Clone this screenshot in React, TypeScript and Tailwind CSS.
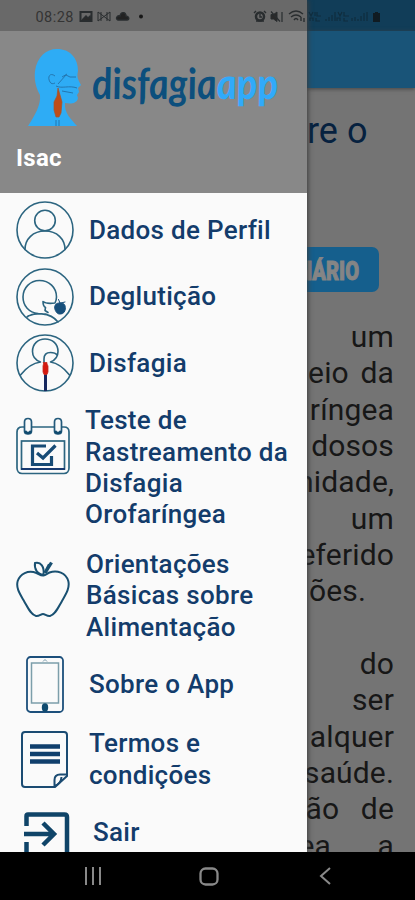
import type { ReactNode } from "react";

const INK = "#0f4a6e";

const circleProps = {
  width: 58,
  height: 58,
  viewBox: "0 0 58 58",
  fill: "none",
  stroke: "#2c6580",
  strokeWidth: 1.6,
  strokeLinecap: "round" as const,
  strokeLinejoin: "round" as const,
};

function ProfileIcon() {
  return (
    <svg {...circleProps}>
      <circle cx="29" cy="29" r="28" />
      <circle cx="29" cy="19.500" r="10.300" />
      <path d="M9 48.500C9 38 17 30 29 30S49 38 49 48.500" />
    </svg>
  );
}

function SwallowIcon() {
  return (
    <svg {...circleProps}>
      <circle cx="29" cy="29" r="28" />
      <path d="M22 45.500C13 44.500 7 38 7 29C7 20 14 12.500 23.500 12.500C33 12.500 40.500 19.500 40.500 29C40.500 31.500 40 33 39 35C35 35.500 30 36 27 33.500C27 36.500 27.500 38.500 29.500 39.500L29 42.500L32 44.500M11 49C17 44.500 34 43.500 42 54M12 48C18 45.500 25 45.500 30 46" />
      <g fill="#174f7b" stroke="#174f7b" strokeWidth="1">
        <path d="M44 35C39.500 34.500 38 38 39 41.500C40 44.500 42 46.500 44.500 46C47.500 46 49 43.500 49.300 41C49.700 37 48 34.500 44 35Z" />
        <path d="M44 35L42.500 31.500M45 35L49 34" />
      </g>
    </svg>
  );
}

function DysphagiaIcon() {
  return (
    <svg {...circleProps}>
      <circle cx="29" cy="29" r="28" />
      <path d="M24.500 28C19 26 16.500 22 16.500 17.500C16.500 10 22 5 29 5C36.500 5 42 10 42 17.500C42 22 39.500 26 34.500 28C41 29 48 34 53.500 41M24.500 28C17 29 10 34 4.500 41" />
      <path d="M28 29V25C28 20.500 31 18.500 34.500 18.500C38 18.500 40 19.500 41 21" />
      <path d="M29.500 38V57" stroke="#17285f" strokeWidth="3" strokeLinecap="butt" />
      <path d="M27.500 28.500H31V30L32 32V38L31 40.500H28L27 38V32L27.500 30Z" fill="#d6190f" stroke="#c5281c" strokeWidth=".8" />
    </svg>
  );
}

function CalendarIcon() {
  return (
    <svg width="54" height="58" viewBox="0 0 54 58" fill="none" stroke="#2c6580" strokeWidth="1.700">
      <path d="M8 10H6C3 10 1 12 1 15V51C1 54 3 56.500 6 56.500H48C51 56.500 53 54 53 51V15C53 12 51 10 48 10H46M16 10H38" />
      <rect x="5.500" y="24" width="43" height="28" />
      <path d="M5 52H49" stroke="#17396f" strokeWidth="2" />
      <g fill="#fafafa" stroke="#235a7b">
        <path d="M8.500 5Q8.500 1.500 12 1.500T15.500 5V14Q15.500 17 12 17T8.500 14Z" />
        <path d="M38.500 5Q38.500 1.500 42 1.500T45.500 5V14Q45.500 17 42 17T38.500 14Z" />
      </g>
      <path d="M9 14Q12 18 15 14M39 14Q42 18 45 14" stroke={INK} strokeWidth="2.500" />
      <path d="M30 29H16.500V47.500H35.500V39M21 36L27 41L39.500 28.500" stroke="#174b75" strokeWidth="3.200" />
    </svg>
  );
}

function AppleIcon() {
  return (
    <svg width="54" height="58" viewBox="0 0 54 58" fill="none" stroke="#195071" strokeWidth="2">
      <path d="M20.500 13C12 9.500 4 14 1.700 21C-.3 28 4 34 8 41C12 48 15 55 20 56C23 56.500 25 54 27 54C29 54 31 56.500 34 56C39 55 42 48 46 41C50 34 54 28 52.300 21C50 13 41 9.500 33.500 12.500C31 13.700 29.500 15.300 27.500 15.500C24.500 15.800 23 14 20.500 13Z" />
      <path d="M27.500 14.500C21.500 14.500 18 9 19 3C25 1.500 28.500 7 27.500 14.500Z" fill="#fafafa" />
      <path d="M29 13L33.500 4.500M29 13L35.500 2.500" strokeWidth="3.300" />
    </svg>
  );
}

function TabletIcon() {
  return (
    <svg width="38" height="57" viewBox="0 0 38 57" fill="none" stroke="#1c4f7b" strokeWidth="1.800">
      <rect x="1" y="1" width="36" height="55" rx="3.500" />
      <rect x="5.500" y="7" width="27" height="40" stroke="#7c9eaa" strokeWidth="1.500" />
      <path d="M17 5.500L19 3.500L21 5.500" stroke="#789bab" strokeWidth="1" />
      <ellipse cx="19" cy="51.500" rx="2.300" ry="3.300" fill={INK} stroke={INK} />
    </svg>
  );
}

function DocumentIcon() {
  return (
    <svg width="47" height="57" viewBox="0 0 47 57" fill="none" stroke="#1b4b72" strokeWidth="2">
      <path d="M4 1H43Q46 1 46 4V45L34 56H4Q1 56 1 53V4Q1 1 4 1Z" />
      <path d="M33.500 56V49Q33.500 43.500 39 43.500H46M34 55Q40 52.500 40.500 46" />
      <path d="M9 15.500H39M9 23H39M9 30.500H39" stroke="#103f6c" strokeWidth="4.500" />
    </svg>
  );
}

function ExitIcon() {
  return (
    <svg width="46" height="54" viewBox="0 0 46 54" fill="none" stroke="#0f4468" strokeWidth="4.500">
      <path d="M2.500 14V4Q2.500 2.500 4 2.500H40.500Q43 2.500 43 5V53M2.500 53V30M0 22H31M19 11L30 22L19 33" />
    </svg>
  );
}

type ItemProps = {
  icon: ReactNode;
  lines: string[];
  row: string;
  label: string;
};

function MenuItem({ icon, lines, row, label }: ItemProps) {
  return (
    <li className={`flex shrink-0 items-center ${row}`}>
      {icon}
      <span className={`shrink-0 whitespace-nowrap ${label}`}>
        {lines.map((line) => (
          <span key={line} className="block">{line}</span>
        ))}
      </span>
    </li>
  );
}

function HeadLogo() {
  return (
    <svg width="54" height="80" viewBox="0 0 54 80" fill="none">
      <path d="M0 77C7 66 13 56 12 46C8 39 6 31 7 22C9 8 18 0 29 0C42 0 50 9 50 22C49 27 49 29 53 36L50 39L51 43L49 46L50 49C49 55 42 55 37 54C36 64 43 70 49 77Z" fill="#2eacf5" />
      <path d="M27 27C22 23 19 28 22 33C23 35 25 35 27 34M30 35L38 26L42 28H48M28 37C34 40 41 36 49 39M34 42L45 44M34 28L39 25M28 71V77M31 71V77" stroke="#2370a8" strokeWidth=".9" />
      <path d="M30 39L32 46L34 53L33 64L31 68H28L26 61V53L29 47Z" fill="#be4d19" stroke="#a4552e" strokeWidth=".7" />
    </svg>
  );
}

function Header() {
  return (
    <header className="h-[193px] shrink-0 bg-[#888888]">
      <div className="h-[31px] bg-[#696969]" />
      <div className="flex h-[96px] pt-[18px] pl-[28px]">
        <HeadLogo />
        <svg className="ml-[11px]" width="192" height="66" viewBox="0 0 192 66">
          <text
            transform="translate(0 50) skewX(5)"
            textLength="186"
            lengthAdjust="spacingAndGlyphs"
            fontFamily="Lato, sans-serif"
            fontStyle="italic"
            fontWeight="700"
            fontSize="43"
            fill="#0c4f7d"
          >
            disfagia<tspan fill="#31aafa" fontWeight="900">app</tspan>
          </text>
        </svg>
      </div>
      <p className="pt-[16px] pl-[16px] text-[24px] leading-[30px] font-bold tracking-[0.3px] text-white">Isac</p>
    </header>
  );
}

function StatusIcons() {
  return (
    <svg className="absolute top-0 left-0" width="415" height="31" viewBox="0 0 415 31" fill="none" stroke="#292d2f" strokeWidth="1.400">
      <text x="35.500" y="21.500" fontFamily="Roboto, sans-serif" fontSize="14.500" textLength="38" fill="#343434" stroke="none">08:28</text>
      <rect x="80.500" y="12" width="11" height="9" strokeWidth="2" />
      <path d="M82 20L86 16L88 18L90 16L91 20" fill="#292929" />
      <path d="M98 12V21L110 12V21L98 12M101 12V21M107 12V21" strokeWidth="1" />
      <path d="M118 20C115 19 117 15 120 16C121 11 126 12 126 16C129 16 130 20 127 20Z" fill="#222" />
      <circle cx="141" cy="16.500" r="2" fill="#171717" stroke="none" />
      <circle cx="260" cy="16.500" r="4" strokeWidth="2.500" />
      <path d="M260 14V17H262M254 13L256 11M264 11L266 13M256 21H264" />
      <path d="M271 14.500H273.500L277 12V21.500L273.500 19H271Z" fill="#292929" strokeWidth="1" />
      <path d="M271 11.500L280 21.500M282 12V22" strokeWidth="1.200" />
      <path d="M289 14Q296 8 303 14M291 17Q296 13 301 17M294 20Q296 17 298 20M301 17V21M304 18V22" />
      <g stroke="#102d3e" strokeWidth="1.200">
        <path d="M309 12L311 16L313 12M315 12V16M317 12V16H321M310 21V18H313V21M316 18V21H320M326 21V19M329 21V17M332 21V15M335 21V12M338 12L340 16L342 12M344 12V16H349M337 21V18H340V21M344 18V21H348M352 21V18M355 21V17M358 21V19M361 21V16M364 21V13M367 21V12" />
      </g>
      <path d="M374 13H375V12H378V13H380V22H373V13Z" fill="#101b22" stroke="none" />
    </svg>
  );
}

const article: { text: string; className?: string }[] = [
  { text: "um" },
  { text: "meio da", className: "[word-spacing:4px]" },
  { text: "ríngea" },
  { text: "dosos" },
  { text: "nidade," },
  { text: "um" },
  { text: "eferido" },
  { text: "ões.", className: "pr-[28px]" },
  { text: "" },
  { text: "do" },
  { text: "ser" },
  { text: "alquer" },
  { text: "saúde." },
  { text: "ão de", className: "[word-spacing:14px]" },
  { text: "ea a", className: "[word-spacing:39px]" },
];

function Page() {
  return (
    <main className="flex h-full w-[108px] flex-col overflow-hidden bg-[#747474]">
      <div className="h-[31px] shrink-0 bg-[#113d58]" />
      <div className="h-[57px] shrink-0 bg-[#195478] shadow-[0_1px_4px_#444]" />
      <h1 className="mt-[21px] h-[45px] shrink-0 text-[36px] leading-[44px] whitespace-nowrap text-[#06213f]">re o</h1>
      <div className="mt-[93px] flex h-[45px] w-[72px] shrink-0 items-center justify-end rounded-r-[7px] bg-[#155f8d] pr-[19px]">
        <svg width="53" height="26" viewBox="0 0 53 26">
          <text x="-9" y="22.500" textLength="61" lengthAdjust="spacingAndGlyphs" fontFamily="Roboto, sans-serif" fontWeight="900" fontSize="26" fill="#858585" stroke="#858585" strokeWidth="1">NÁRIO</text>
        </svg>
      </div>
      <div className="mt-[27px] pr-[21px] text-[30px] leading-[36.350px] tracking-[0.150px] text-[#171717]">
        {article.map(({ text, className = "" }, i) => (
          <p key={i} className={`flex h-[36.350px] justify-end whitespace-nowrap ${className}`}>
            <span>{text}</span>
          </p>
        ))}
      </div>
    </main>
  );
}

function NavigationBar() {
  return (
    <nav className="flex h-[48px] items-center bg-black text-[#898989]">
      <svg className="ml-[84px]" width="18" height="18" viewBox="0 0 18 18" stroke="currentColor" strokeWidth="2">
        <path d="M2 0V18M9 0V18M16 0V18" />
      </svg>
      <svg className="ml-[97px]" width="20" height="19" viewBox="0 0 20 19" fill="none" stroke="currentColor" strokeWidth="2.300">
        <rect x="1.500" y="1.500" width="17" height="16" rx="5" />
      </svg>
      <svg className="ml-[100px]" width="13" height="18" viewBox="0 0 13 18" fill="none" stroke="currentColor" strokeWidth="2">
        <path d="M11 1L2 9L11 17" />
      </svg>
    </nav>
  );
}

export default function App() {
  return (
    <div className="h-[900px] w-[415px] overflow-hidden font-['Roboto',sans-serif]">
      <div className="relative flex h-[852px] overflow-hidden">
        <aside className="z-10 flex h-full w-[307px] shrink-0 flex-col overflow-hidden bg-[#fafafa] shadow-[1px_0_5px_#3b3b3b]">
          <Header />
          <ul className="flex flex-col text-[26px] leading-[31.300px] font-medium tracking-[0.300px] text-[#133c6b]">
            <MenuItem icon={<ProfileIcon />} lines={["Dados de Perfil"]} row="mt-[8px] h-[58px] pl-[16px]" label="ml-[15px] pt-[1.500px]" />
            <MenuItem icon={<SwallowIcon />} lines={["Deglutição"]} row="mt-[8.500px] h-[58px] pl-[16px]" label="ml-[15px]" />
            <MenuItem icon={<DysphagiaIcon />} lines={["Disfagia"]} row="mt-[8.500px] h-[58px] pl-[16px]" label="ml-[15px] pt-[1.500px]" />
            <MenuItem icon={<CalendarIcon />} lines={["Teste de", "Rastreamento da", "Disfagia", "Orofaríngea"]} row="mt-[13px] h-[125px] pl-[16px] [&>svg]:-mt-[44px]" label="ml-[15px] pt-px" />
            <MenuItem icon={<AppleIcon />} lines={["Orientações", "Básicas sobre", "Alimentação"]} row="mt-[18px] h-[94px] pl-[16px] [&>svg]:-mt-[13px]" label="ml-[16px] pt-[2px]" />
            <MenuItem icon={<TabletIcon />} lines={["Sobre o App"]} row="mt-[14px] h-[57px] pl-[26px]" label="ml-[25px] pt-px" />
            <MenuItem icon={<DocumentIcon />} lines={["Termos e", "condições"]} row="mt-[15px] h-[63px] pl-[21px]" label="ml-[21px]" />
            <MenuItem icon={<ExitIcon />} lines={["Sair"]} row="mt-[21px] h-[54px] items-start pl-[24px]" label="ml-[23px] pt-[5px]" />
          </ul>
        </aside>
        <Page />
        <div className="absolute top-0 left-0 z-20">
          <StatusIcons />
        </div>
      </div>
      <NavigationBar />
    </div>
  );
}
